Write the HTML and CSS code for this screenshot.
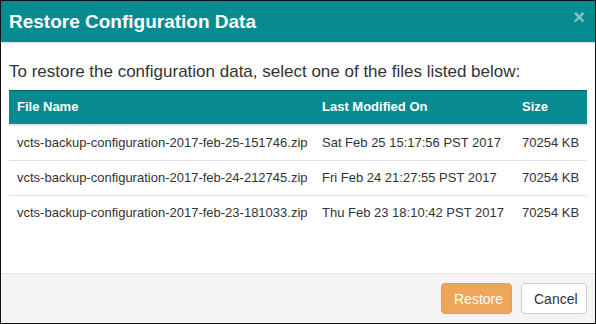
FILE: index.html
```html
<!DOCTYPE html>
<html lang="en">
<head>
    <meta charset="UTF-8">
    <title>Restore Configuration Data</title>
    <link rel="stylesheet" href="styles.css">
</head>
<body>
    <div class="modal">
        <div class="modal-header">
            <h1>Restore Configuration Data</h1>
            <span class="close">&times;</span>
        </div>
        <div class="modal-body">
            <p>To restore the configuration data, select one of the files listed below:</p>
            <table>
                <thead>
                    <tr>
                        <th class="col-name">File Name</th>
                        <th class="col-date">Last Modified On</th>
                        <th>Size</th>
                    </tr>
                </thead>
                <tbody>
                    <tr>
                        <td>vcts-backup-configuration-2017-feb-25-151746.zip</td>
                        <td>Sat Feb 25 15:17:56 PST 2017</td>
                        <td>70254 KB</td>
                    </tr>
                    <tr>
                        <td>vcts-backup-configuration-2017-feb-24-212745.zip</td>
                        <td>Fri Feb 24 21:27:55 PST 2017</td>
                        <td>70254 KB</td>
                    </tr>
                    <tr>
                        <td>vcts-backup-configuration-2017-feb-23-181033.zip</td>
                        <td>Thu Feb 23 18:10:42 PST 2017</td>
                        <td>70254 KB</td>
                    </tr>
                </tbody>
            </table>
        </div>
        <div class="modal-footer">
            <button class="btn btn-restore">Restore</button>
            <button class="btn btn-cancel">Cancel</button>
        </div>
    </div>
</body>
</html>
```
FILE: styles.css
```css
html, body {
    margin: 0;
    height: 100%;
}
body {
    font-family: "Liberation Sans", Arial, sans-serif;
    color: #333;
    background: #fff;
}
.modal {
    box-sizing: border-box;
    height: 324px;
    border: 1px solid #111;
    display: flex;
    flex-direction: column;
}
.modal-header {
    background-color: #088a91;
    height: 41px;
    border-bottom: 1px solid #d8e8e9;
    display: flex;
    align-items: center;
    justify-content: space-between;
    padding: 0 8px;
}
.modal-header h1 {
    margin: 0;
    font-size: 19px;
    font-weight: bold;
    color: #fff;
}
.close {
    color: #fff;
    opacity: 0.5;
    font-size: 20px;
    font-weight: bold;
    margin-right: 2px;
    margin-top: -8px;
}
.modal-body {
    flex: 1;
    padding: 0 8px;
}
.modal-body p {
    margin: 19px 0 8px 0;
    font-size: 17px;
    line-height: 20px;
}
table {
    width: 100%;
    border-collapse: collapse;
    table-layout: fixed;
    font-size: 13px;
}
th, td {
    text-align: left;
    padding: 8px;
    line-height: 18px;
    white-space: nowrap;
}
th {
    background-color: #088a91;
    color: #fff;
    font-weight: bold;
    border-top: 1px solid #0a5f64;
    border-bottom: 2px solid #d8e8e9;
    padding: 7px 8px 8px 8px;
}
td {
    border-bottom: 1px solid #ddd;
}
tbody tr:last-child td {
    border-bottom: none;
}
.col-name {
    width: 289px;
}
.col-date {
    width: 184px;
}
.modal-footer {
    height: 49px;
    border-top: 1px solid #e5e5e5;
    background-color: #f4f4f4;
    display: flex;
    align-items: center;
    justify-content: flex-end;
    padding: 0 8px;
    gap: 9px;
}
.btn {
    font-family: "Liberation Sans", Arial, sans-serif;
    font-size: 14px;
    height: 31px;
    padding: 0 12px;
    border-radius: 4px;
    cursor: pointer;
}
.btn-restore {
    background-color: #eea65a;
    border: 1px solid #e69c4d;
    color: #fff;
    width: 71px;
}
.btn-cancel {
    background-color: #fff;
    border: 1px solid #ccc;
    color: #333;
    width: 66px;
}
```
